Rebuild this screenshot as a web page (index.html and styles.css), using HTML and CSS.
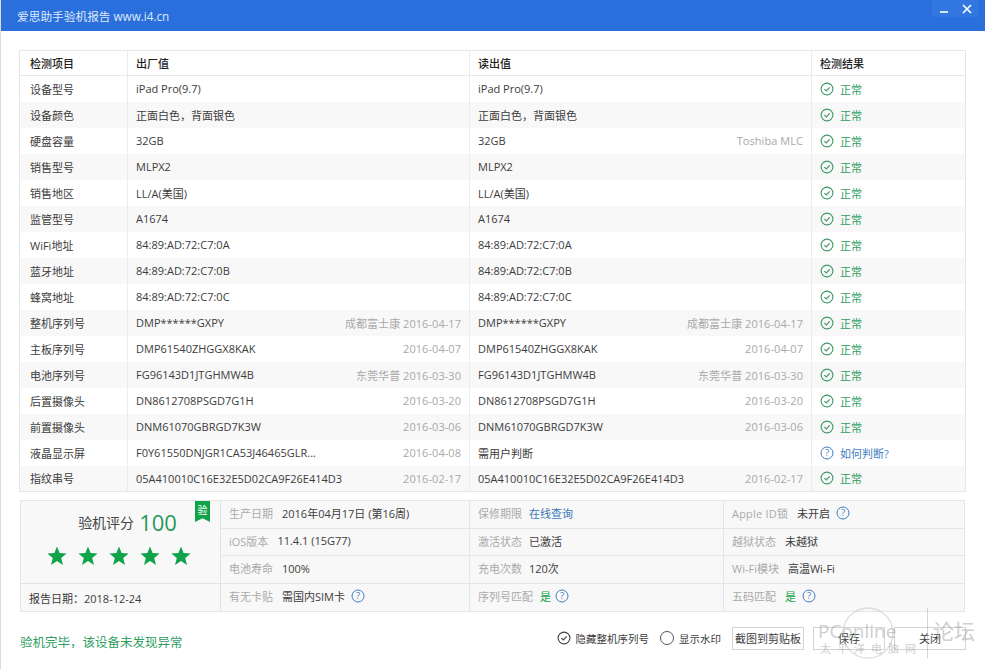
FILE: index.html
```html
<!DOCTYPE html>
<html lang="zh-CN">
<head>
  <meta charset="UTF-8">
  <title>爱思助手验机报告</title>
  <link rel="stylesheet" href="styles.css">
</head>
<body>
  <svg class="defs" width="0" height="0">
    <symbol id="ok" viewBox="0 0 14 14"><circle cx="7" cy="7" r="5.9" fill="none" stroke="currentColor" stroke-width="1.1"/><path d="M4.4 7.1 6.3 9 9.7 5.4" fill="none" stroke="currentColor" stroke-width="1.2"/></symbol>
    <symbol id="help" viewBox="0 0 14 14"><circle cx="7" cy="7" r="6" fill="none" stroke="currentColor" stroke-width="1"/><text x="7" y="10.4" text-anchor="middle" font-size="9.5" fill="currentColor" font-family="Open Sans">?</text></symbol>
    <symbol id="star" viewBox="0 0 20 20"><path d="M10 0.5 12.6 7.1 19.6 7.5 14.2 12 16 19 10 15.1 4 19 5.8 12 .4 7.5 7.4 7.1Z" fill="currentColor"/></symbol>
  </svg>

  <header class="titlebar">
    <span class="title">爱思助手验机报告 www.i4.cn</span>
    <div class="winbtns">
      <span class="winbtn min"></span>
      <span class="winbtn">
        <svg width="10" height="10" viewBox="0 0 10 10"><path d="M1 1 9 9M9 1 1 9" stroke="#fff" stroke-width="1.6"/></svg>
      </span>
    </div>
  </header>

  <main class="content">
    <table class="report">
      <colgroup><col class="c1"><col class="c2"><col class="c2"><col class="c3"></colgroup>
      <thead>
        <tr><th>检测项目</th><th>出厂值</th><th>读出值</th><th>检测结果</th></tr>
      </thead>
      <tbody id="rows"></tbody>
    </table>

    <section class="summary">
      <div class="score">
        <div class="score-main">
          <span class="badge">验</span>
          <div class="score-line"><span class="score-label">验机评分</span><span class="score-num">100</span></div>
          <div class="stars">
            <svg width="20" height="20"><use href="#star"/></svg>
            <svg width="20" height="20"><use href="#star"/></svg>
            <svg width="20" height="20"><use href="#star"/></svg>
            <svg width="20" height="20"><use href="#star"/></svg>
            <svg width="20" height="20"><use href="#star"/></svg>
          </div>
        </div>
        <div class="report-date">报告日期：2018-12-24</div>
      </div>
      <div class="facts">
        <div class="fact"><span class="key">生产日期</span><span>2016年04月17日 (第16周)</span></div>
        <div class="fact"><span class="key">保修期限</span><span class="link">在线查询</span></div>
        <div class="fact"><span class="key wide">Apple ID锁</span><span>未开启</span><svg class="q" width="14" height="14"><use href="#help"/></svg></div>
        <div class="fact"><span class="key">iOS版本</span><span>11.4.1 (15G77)</span></div>
        <div class="fact"><span class="key">激活状态</span><span>已激活</span></div>
        <div class="fact"><span class="key">越狱状态</span><span>未越狱</span></div>
        <div class="fact"><span class="key">电池寿命</span><span>100%</span></div>
        <div class="fact"><span class="key">充电次数</span><span>120次</span></div>
        <div class="fact"><span class="key">Wi-Fi模块</span><span>高温Wi-Fi</span></div>
        <div class="fact"><span class="key">有无卡贴</span><span>需国内SIM卡</span><svg class="q" width="14" height="14"><use href="#help"/></svg></div>
        <div class="fact"><span class="key">序列号匹配</span><span class="yes">是</span><svg class="q" width="14" height="14"><use href="#help"/></svg></div>
        <div class="fact"><span class="key">五码匹配</span><span class="yes">是</span><svg class="q" width="14" height="14"><use href="#help"/></svg></div>
      </div>
    </section>

    <footer class="actions">
      <span class="done">验机完毕，该设备未发现异常</span>
      <div class="controls">
        <label class="opt"><svg class="check" width="14" height="14"><use href="#ok"/></svg>隐藏整机序列号</label>
        <label class="opt"><span class="radio"></span>显示水印</label>
        <button class="btn">截图到剪贴板</button>
        <button class="btn">保存</button>
        <button class="btn">关闭</button>
      </div>
    </footer>
  </main>

  <div class="watermark">
    <svg class="wm-ring" width="54" height="54" viewBox="0 0 54 54"><circle cx="27" cy="27" r="25" fill="none" stroke="currentColor" stroke-width="1.5"/></svg>
    <span class="wm-brand">PConline</span>
    <span class="wm-sub">太平洋电脑网</span>
    <span class="wm-forum">论坛</span>
  </div>

  <script>
    const data = [
      ['设备型号', 'iPad Pro(9.7)', '', 'iPad Pro(9.7)', ''],
      ['设备颜色', '正面白色，背面银色', '', '正面白色，背面银色', ''],
      ['硬盘容量', '32GB', '', '32GB', 'Toshiba MLC'],
      ['销售型号', 'MLPX2', '', 'MLPX2', ''],
      ['销售地区', 'LL/A(美国)', '', 'LL/A(美国)', ''],
      ['监管型号', 'A1674', '', 'A1674', ''],
      ['WiFi地址', '84:89:AD:72:C7:0A', '', '84:89:AD:72:C7:0A', ''],
      ['蓝牙地址', '84:89:AD:72:C7:0B', '', '84:89:AD:72:C7:0B', ''],
      ['蜂窝地址', '84:89:AD:72:C7:0C', '', '84:89:AD:72:C7:0C', ''],
      ['整机序列号', 'DMP******GXPY', '成都富士康 2016-04-17', 'DMP******GXPY', '成都富士康 2016-04-17'],
      ['主板序列号', 'DMP61540ZHGGX8KAK', '2016-04-07', 'DMP61540ZHGGX8KAK', '2016-04-07'],
      ['电池序列号', 'FG96143D1JTGHMW4B', '东莞华普 2016-03-30', 'FG96143D1JTGHMW4B', '东莞华普 2016-03-30'],
      ['后置摄像头', 'DN8612708PSGD7G1H', '2016-03-20', 'DN8612708PSGD7G1H', '2016-03-20'],
      ['前置摄像头', 'DNM61070GBRGD7K3W', '2016-03-06', 'DNM61070GBRGD7K3W', '2016-03-06'],
      ['液晶显示屏', 'F0Y61550DNJGR1CA53J46465GLR...', '2016-04-08', '需用户判断', '', 'ask'],
      ['指纹串号', '05A410010C16E32E5D02CA9F26E414D3', '2016-02-17', '05A410010C16E32E5D02CA9F26E414D3', '2016-02-17']
    ];

    function valueCell(text, note) {
      return '<td><div class="val"><span>' + text + '</span><span class="note">' + note + '</span></div></td>';
    }

    document.getElementById('rows').innerHTML = data.map(function (r) {
      const result = r[5] === 'ask'
        ? '<span class="res ask"><svg width="14" height="14"><use href="#help"/></svg>如何判断?</span>'
        : '<span class="res"><svg width="14" height="14"><use href="#ok"/></svg>正常</span>';
      return '<tr><td class="name">' + r[0] + '</td>' + valueCell(r[1], r[2]) + valueCell(r[3], r[4]) + '<td>' + result + '</td></tr>';
    }).join('');
  </script>
</body>
</html>
```
FILE: styles.css
```css
* {
  box-sizing: border-box;
}
html, body {
  height: 100%;
}
body {
  margin: 0;
  height: 669px;
  overflow: hidden;
  background: #fff;
  color: #3c3c3c;
  font-family: "Open Sans", "Noto Sans CJK SC", sans-serif;
  font-size: 11px;
  border-left: 1px solid #dcdcdc;
  position: relative;
}
.defs {
  display: none;
}
.titlebar {
  height: 31px;
  background: #2a6fdb;
  color: #dfeafb;
  display: flex;
  align-items: center;
  justify-content: space-between;
  padding: 0 7px 0 16px;
}
.title {
  font-size: 11.7px;
}
.winbtns {
  display: flex;
  align-self: flex-start;
}
.winbtn {
  width: 23px;
  height: 17px;
  background: #3177df;
  display: flex;
  align-items: center;
  justify-content: center;
}
.winbtn.min::after {
  content: "";
  width: 8px;
  height: 2px;
  margin-top: 6px;
  background: #d5e3f8;
}
.content {
  padding: 19px 19px 0 18px;
}
.report {
  width: 946px;
  border-collapse: collapse;
  table-layout: fixed;
  border: 1px solid #e6e6e6;
}
.c1 { width: 108px; }
.c2 { width: 342px; }
.c3 { width: 154px; }
.report th, .report td {
  height: 26px;
  padding: 0 8px;
  border-left: 1px solid #ececec;
  text-align: left;
  white-space: nowrap;
}
.report th {
  height: 25px;
  font-weight: 500;
  color: #222;
  border-bottom: 1px solid #e8e8e8;
}
.report td.name, .report th:first-child {
  padding-left: 10px;
  border-left: 0;
}
.report tbody tr:nth-child(even) {
  background: #f8f8f8;
}
.val {
  display: flex;
  justify-content: space-between;
}
.note {
  color: #a9a9a9;
  letter-spacing: .05px;
}
.res {
  display: flex;
  align-items: center;
  gap: 6px;
  color: #2f9e5f;
}
.res svg {
  color: #3d9a68;
}
.res.ask, .res.ask svg {
  color: #3f7cc0;
}
.summary {
  display: grid;
  grid-template-columns: 200px 1fr;
  height: 112px;
  margin-top: 8px;
  margin-left: 1px;
  width: 945px;
  background: #f8f8f8;
  border: 1px solid #e6e6e6;
}
.score {
  display: flex;
  flex-direction: column;
  border-right: 1px solid #e2e2e2;
}
.score-main {
  height: 83px;
  position: relative;
  border-bottom: 1px solid #e2e2e2;
  padding-top: 5px;
}
.badge {
  position: absolute;
  top: 0;
  right: 10px;
  width: 15px;
  height: 21px;
  padding-top: 1px;
  background: #0fa34a;
  color: #fff;
  font-size: 10px;
  text-align: center;
  clip-path: polygon(0 0, 100% 0, 100% 100%, 50% 82%, 0 100%);
}
.score-line {
  display: flex;
  align-items: center;
  justify-content: center;
  gap: 5px;
  height: 32px;
  padding-left: 14px;
}
.score-label {
  font-size: 14px;
  color: #444;
}
.score-num {
  font-size: 22px;
  color: #24995a;
}
.stars {
  display: flex;
  justify-content: center;
  gap: 11px;
  color: #0fa34a;
  margin-top: 8px;
  padding-right: 3px;
}
.report-date {
  flex: 1;
  display: flex;
  align-items: center;
  padding-left: 8px;
}
.facts {
  display: grid;
  grid-template-columns: 249px 254px 1fr;
  grid-template-rows: 28px 27px 28px 1fr;
}
.fact {
  display: flex;
  align-items: center;
  gap: 9px;
  padding: 0 0 3px 8px;
  border-right: 1px solid #e6e6e6;
  border-bottom: 1px solid #e6e6e6;
  white-space: nowrap;
}
.fact:nth-child(3n+2) {
  gap: 7px;
}
.fact:nth-child(3n) {
  border-right: 0;
}
.fact:nth-last-child(-n+3) {
  border-bottom: 0;
}
.key {
  color: #aaa;
}
.key.wide {
  letter-spacing: .2px;
}
.link {
  color: #3a78b8;
}
.yes {
  color: #16a34a;
}
.q {
  color: #3f7cc0;
  margin-left: -3px;
}
.actions {
  display: flex;
  align-items: center;
  justify-content: space-between;
  height: 40px;
  margin-top: 9px;
  margin-left: 1px;
  width: 946px;
}
.done {
  color: #2f9e5f;
  font-size: 12.5px;
}
.controls {
  display: flex;
  align-items: center;
  margin-top: -6px;
}
.opt {
  display: flex;
  align-items: center;
  gap: 5px;
  margin-right: 11px;
  font-size: 10.5px;
}
.check {
  color: #444;
}
.radio {
  width: 14px;
  height: 14px;
  border: 1px solid #555;
  border-radius: 50%;
}
.btn {
  width: 72px;
  height: 23px;
  margin-right: 9px;
  padding: 0;
  background: #fff;
  border: 1px solid #d4d4d4;
  color: #3c3c3c;
  font: inherit;
}
.btn:last-child {
  margin-right: 0;
}
/* site stamp burned into the screenshot */
.watermark {
  position: absolute;
  left: 812px;
  top: 606px;
  width: 170px;
  height: 54px;
  color: rgba(165, 165, 165, .55);
}
.wm-ring {
  position: absolute;
  left: 28px;
  top: 0;
  opacity: .6;
}
.wm-brand {
  position: absolute;
  left: 5px;
  top: 12px;
  font-size: 19px;
}
.wm-sub {
  position: absolute;
  left: 7px;
  top: 34px;
  font-size: 11px;
  letter-spacing: 6px;
}
.wm-forum {
  position: absolute;
  left: 114px;
  top: 2px;
  height: 50px;
  line-height: 46px;
  font-size: 21px;
  padding-left: 5px;
  border-left: 1px solid rgba(165, 165, 165, .45);
}
```
